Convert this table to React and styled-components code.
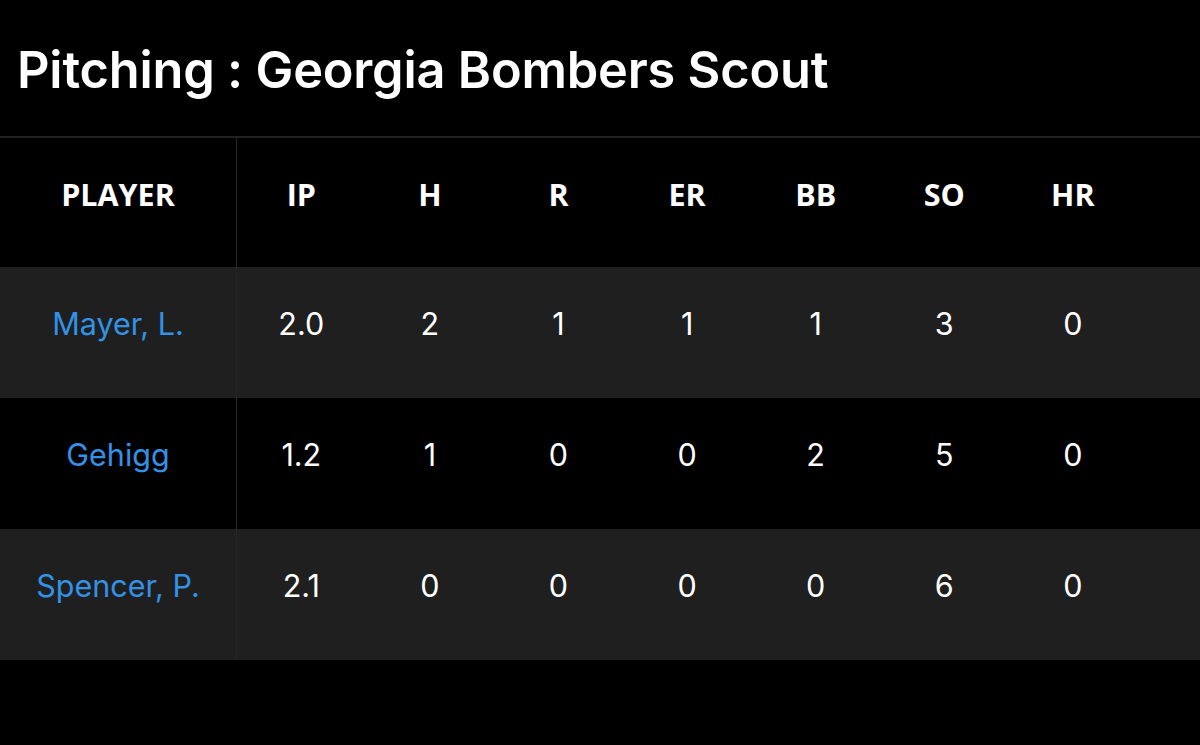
import React from 'react';
import styled, { createGlobalStyle } from 'styled-components';

const Global = createGlobalStyle`
body {
  margin: 0;
  background: #000;
  font-family: Inter, "Open Sans", sans-serif;
}
`

const Page = styled.div`
width: 1200px;
height: 745px;
background: #000;
color: #fff;
`

const Title = styled.h1`
margin: 0;
height: 136px;
padding-left: 17px;
display: flex;
align-items: center;
padding-top: 2px;
box-sizing: border-box;
font-family: Inter, sans-serif;
font-weight: 600;
font-size: 50.5px;
letter-spacing: -0.2px;
`

const Table = styled.div`
border-top: 2px solid #222;
`

const Row = styled.div`
display: grid;
grid-template-columns: 237px repeat(7, 128.6px) 1fr;
height: ${p => p.$head ? 129 : 131}px;
background: ${p => p.$shade ? '#1f1f1f' : '#000'};
`

const Cell = styled.div`
display: flex;
align-items: center;
justify-content: center;
padding-bottom: ${p => p.$head ? 18 : 19}px;
box-sizing: border-box;
border-right: ${p => p.$first ? '1px solid #262626' : 'none'};
font-family: ${p => p.$head ? '"Open Sans", sans-serif' : 'Inter, sans-serif'};
font-weight: ${p => p.$head ? 700 : 400};
font-size: 30.5px;
color: ${p => p.$link ? '#3391e6' : '#fff'};
`

const cols = ['IP', 'H', 'R', 'ER', 'BB', 'SO', 'HR'];

const players = [
  { name: 'Mayer, L.', stats: ['2.0', '2', '1', '1', '1', '3', '0'] },
  { name: 'Gehigg', stats: ['1.2', '1', '0', '0', '2', '5', '0'] },
  { name: 'Spencer, P.', stats: ['2.1', '0', '0', '0', '0', '6', '0'] },
];

const App = () => {
  return (
    <Page>
      <Global />
      <Title>Pitching : Georgia Bombers Scout</Title>
      <Table>
        <Row $head>
          <Cell $head $first>PLAYER</Cell>
          {cols.map(c => <Cell $head key={c}>{c}</Cell>)}
          <Cell />
        </Row>
        {players.map((p, i) => (
          <Row key={p.name} $shade={i % 2 === 0}>
            <Cell $first $link>{p.name}</Cell>
            {p.stats.map((s, j) => <Cell key={j}>{s}</Cell>)}
            <Cell />
          </Row>
        ))}
      </Table>
    </Page>
  )
}

export default App
